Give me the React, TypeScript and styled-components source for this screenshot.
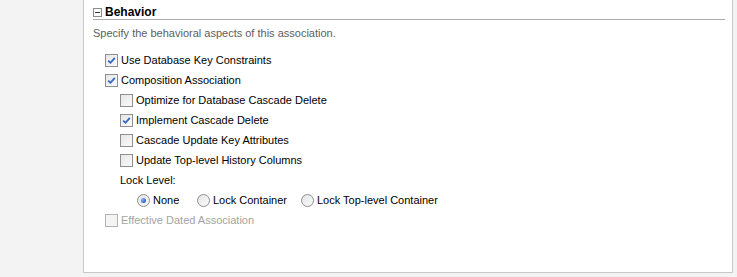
import React from "react";
import styled, { createGlobalStyle } from "styled-components";

const Global = createGlobalStyle`
  html, body { margin: 0; padding: 0; background: #f3f3f3; }
  body { font-family: "Liberation Sans", Arial, sans-serif; font-size: 11px; color: #000; }
`;

const Page = styled.div`
  width: 737px;
  height: 277px;
  box-sizing: border-box;
  padding: 0 4px 4px 83px;
  background: #f3f3f3;
  display: flex;
`;

const Panel = styled.div`
  flex: 1;
  background: #fff;
  border: 1px solid #c9c9c9;
  border-top: none;
  display: flex;
  flex-direction: column;
  padding: 0 7px 0 9px;
`;

const Header = styled.div`
  height: 20px;
  border-bottom: 1px solid #acacac;
  display: flex;
  align-items: center;
  gap: 3px;
  padding-top: 5px;
  box-sizing: border-box;
`;

const Toggle = styled.span`
  width: 9px;
  height: 9px;
  box-sizing: border-box;
  border: 1px solid #8c8c8c;
  background: #fff;
  display: flex;
  align-items: center;
  justify-content: center;
  &::after {
    content: "";
    width: 5px;
    height: 1px;
    background: #333;
  }
`;

const Title = styled.span`
  font-weight: bold;
  font-size: 12px;
`;

const Description = styled.div`
  height: 20px;
  line-height: 20px;
  margin: 3px 0 7px;
  color: #5e5e5e;
`;

const Row = styled.div<{ $indent: number }>`
  height: 20px;
  display: flex;
  align-items: center;
  padding-left: ${(p) => p.$indent}px;
`;

const Label = styled.span<{ $disabled?: boolean }>`
  color: ${(p) => (p.$disabled ? "#a3a3a3" : "#000")};
  white-space: nowrap;
`;

const Box = styled.span<{ $disabled?: boolean }>`
  width: 13px;
  height: 13px;
  box-sizing: border-box;
  border: 1px solid ${(p) => (p.$disabled ? "#b4b4ac" : "#8e8f8f")};
  background: ${(p) =>
    p.$disabled ? "#f4f4f4" : "linear-gradient(135deg, #e6e6e6 0%, #fafafa 100%)"};
  margin-right: 3px;
  display: flex;
  align-items: center;
  justify-content: center;
  flex: none;
`;

const Radio = styled.span<{ $checked?: boolean }>`
  width: 13px;
  height: 13px;
  box-sizing: border-box;
  border-radius: 50%;
  border: 1px solid #8e8f8f;
  background: linear-gradient(135deg, #e4e4e4 0%, #fbfbfb 100%);
  display: flex;
  align-items: center;
  justify-content: center;
  margin-right: 3px;
  flex: none;
  &::after {
    content: "";
    display: ${(p) => (p.$checked ? "block" : "none")};
    width: 5px;
    height: 5px;
    border-radius: 50%;
    background: radial-gradient(circle at 35% 35%, #8fb2f0 0%, #2f5fc8 70%);
  }
`;

const RadioGroup = styled.div`
  height: 20px;
  display: flex;
  align-items: center;
  padding-left: 44px;
`;

const RadioItem = styled.label<{ $width: number }>`
  display: flex;
  align-items: center;
  width: ${(p) => p.$width}px;
`;

const Check = () => (
  <svg width="9" height="9" viewBox="0 0 9 9">
    <path d="M1.2 4.6 L3.5 6.8 L7.8 1.8" fill="none" stroke="#3566c5" strokeWidth="1.8" />
  </svg>
);

const CheckRow = ({
  indent,
  checked,
  disabled,
  children,
}: {
  indent: number;
  checked?: boolean;
  disabled?: boolean;
  children: React.ReactNode;
}) => (
  <Row $indent={indent}>
    <Box $disabled={disabled}>{checked && <Check />}</Box>
    <Label $disabled={disabled}>{children}</Label>
  </Row>
);

export default function App() {
  return (
    <>
      <Global />
      <Page>
        <Panel>
          <Header>
            <Toggle />
            <Title>Behavior</Title>
          </Header>
          <Description>Specify the behavioral aspects of this association.</Description>
          <CheckRow indent={12} checked>Use Database Key Constraints</CheckRow>
          <CheckRow indent={12} checked>Composition Association</CheckRow>
          <CheckRow indent={27}>Optimize for Database Cascade Delete</CheckRow>
          <CheckRow indent={27} checked>Implement Cascade Delete</CheckRow>
          <CheckRow indent={27}>Cascade Update Key Attributes</CheckRow>
          <CheckRow indent={27}>Update Top-level History Columns</CheckRow>
          <Row $indent={27}>
            <Label>Lock Level:</Label>
          </Row>
          <RadioGroup>
            <RadioItem $width={60}>
              <Radio $checked />
              <Label>None</Label>
            </RadioItem>
            <RadioItem $width={104}>
              <Radio />
              <Label>Lock Container</Label>
            </RadioItem>
            <RadioItem $width={160}>
              <Radio />
              <Label>Lock Top-level Container</Label>
            </RadioItem>
          </RadioGroup>
          <CheckRow indent={12} disabled>Effective Dated Association</CheckRow>
        </Panel>
      </Page>
    </>
  );
}
